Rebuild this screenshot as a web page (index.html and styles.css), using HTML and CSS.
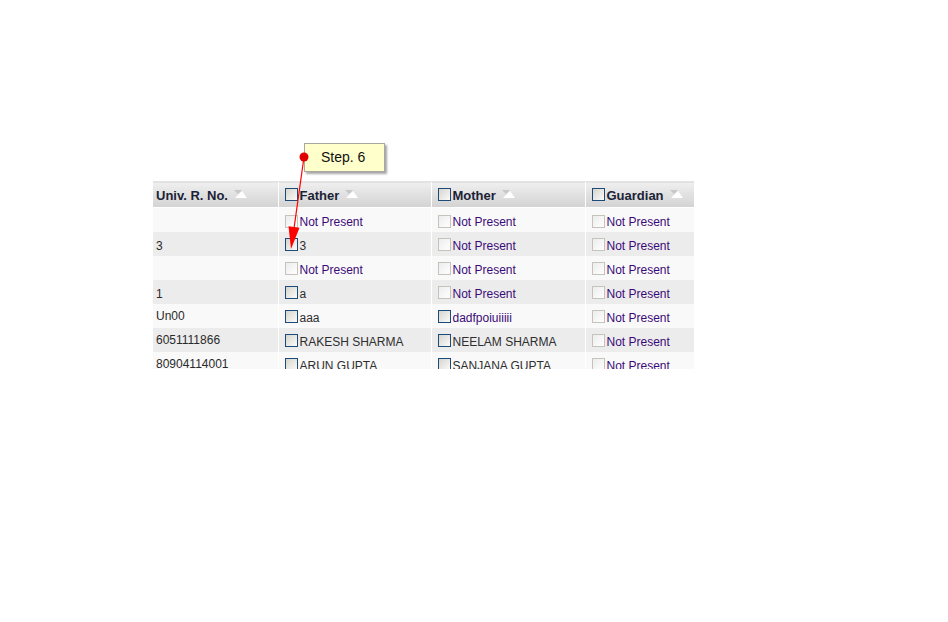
FILE: index.html
```html
<!DOCTYPE html>
<html>
<head>
<meta charset="utf-8">
<link rel="stylesheet" href="styles.css">
</head>
<body>
<div class="page">
  <div class="grid-wrap">
    <table class="grid">
      <colgroup>
        <col class="c1"><col class="c2"><col class="c3"><col class="c4">
      </colgroup>
      <thead>
        <tr>
          <th><span class="hd">Univ. R. No.</span><svg class="sort" width="14" height="8" viewBox="0 0 14 8"><polygon points="0,0 8,0 4,4" fill="#c8c8c8"/><polygon points="1,8 13,8 8,1" fill="#ffffff"/></svg></th>
          <th><span class="cb on"></span><span class="hd">Father</span><svg class="sort" width="14" height="8" viewBox="0 0 14 8"><polygon points="0,0 8,0 4,4" fill="#c8c8c8"/><polygon points="1,8 13,8 8,1" fill="#ffffff"/></svg></th>
          <th><span class="cb on"></span><span class="hd">Mother</span><svg class="sort" width="14" height="8" viewBox="0 0 14 8"><polygon points="0,0 8,0 4,4" fill="#c8c8c8"/><polygon points="1,8 13,8 8,1" fill="#ffffff"/></svg></th>
          <th><span class="cb on"></span><span class="hd">Guardian</span><svg class="sort" width="14" height="8" viewBox="0 0 14 8"><polygon points="0,0 8,0 4,4" fill="#c8c8c8"/><polygon points="1,8 13,8 8,1" fill="#ffffff"/></svg></th>
        </tr>
      </thead>
      <tbody>
        <tr class="odd">
          <td></td>
          <td><span class="cb"></span><span class="np">Not Present</span></td>
          <td><span class="cb"></span><span class="np">Not Present</span></td>
          <td><span class="cb"></span><span class="np">Not Present</span></td>
        </tr>
        <tr class="even">
          <td>3</td>
          <td><span class="cb on"></span><span class="val">3</span></td>
          <td><span class="cb"></span><span class="np">Not Present</span></td>
          <td><span class="cb"></span><span class="np">Not Present</span></td>
        </tr>
        <tr class="odd">
          <td></td>
          <td><span class="cb"></span><span class="np">Not Present</span></td>
          <td><span class="cb"></span><span class="np">Not Present</span></td>
          <td><span class="cb"></span><span class="np">Not Present</span></td>
        </tr>
        <tr class="even">
          <td>1</td>
          <td><span class="cb on"></span><span class="val">a</span></td>
          <td><span class="cb"></span><span class="np">Not Present</span></td>
          <td><span class="cb"></span><span class="np">Not Present</span></td>
        </tr>
        <tr class="odd">
          <td class="raise">Un00</td>
          <td><span class="cb on"></span><span class="val">aaa</span></td>
          <td><span class="cb on"></span><span class="np">dadfpoiuiiiii</span></td>
          <td><span class="cb"></span><span class="np">Not Present</span></td>
        </tr>
        <tr class="even">
          <td class="raise">6051111866</td>
          <td><span class="cb on"></span><span class="val">RAKESH SHARMA</span></td>
          <td><span class="cb on"></span><span class="val">NEELAM SHARMA</span></td>
          <td><span class="cb"></span><span class="np">Not Present</span></td>
        </tr>
        <tr class="odd">
          <td class="raise">80904114001</td>
          <td><span class="cb on"></span><span class="val">ARUN GUPTA</span></td>
          <td><span class="cb on"></span><span class="val">SANJANA GUPTA</span></td>
          <td><span class="cb"></span><span class="np">Not Present</span></td>
        </tr>
      </tbody>
    </table>
  </div>

  <div class="callout">Step. 6</div>
  <svg class="pointer" width="948" height="622" viewBox="0 0 948 622">
    <line x1="304" y1="157" x2="293.5" y2="232" stroke="#ff0000" stroke-width="1.2"/>
    <polygon points="288.5,226.2 299.5,227.8 291,249" fill="#ff0000"/>
    <circle cx="304" cy="157" r="4.5" fill="#e00000"/>
  </svg>
</div>
</body>
</html>
```

FILE: styles.css
```css
html, body {
  margin: 0;
  padding: 0;
  background: #ffffff;
}

.page {
  position: relative;
  width: 948px;
  height: 622px;
  overflow: hidden;
  font-family: "Liberation Sans", Arial, sans-serif;
}

.grid-wrap {
  margin: 181px 0 0 153px;
  width: 541px;
  height: 188px;
  overflow: hidden;
}

.grid {
  table-layout: fixed;
  border-collapse: collapse;
  width: 541px;
}

.c1 { width: 125px; }
.c2 { width: 153px; }
.c3 { width: 154px; }
.c4 { width: 109px; }

.grid th {
  height: 26px;
  padding: 0 0 0 6px;
  text-align: left;
  white-space: nowrap;
  background: linear-gradient(#efefef 0%, #e2e2e2 45%, #d3d3d3 100%);
  border-top: 1px solid #e4e4e4;
  border-left: 1px solid #ffffff;
  border-bottom: 1px solid #ffffff;
  box-sizing: border-box;
  vertical-align: middle;
}

.grid th:first-child {
  padding-left: 3px;
  border-left: 0;
}

.hd {
  font-weight: bold;
  font-size: 13px;
  color: #1b2236;
  vertical-align: middle;
}

.sort {
  display: inline-block;
  vertical-align: middle;
  margin-left: 6px;
  margin-top: -2px;
}

.grid td {
  height: 24px;
  padding: 4px 0 0 6px;
  font-size: 12px;
  color: #333333;
  white-space: nowrap;
  border-left: 1px solid #ffffff;
  box-sizing: border-box;
  vertical-align: middle;
}

.grid td:first-child {
  padding-left: 3px;
  border-left: 0;
  color: #2a2a2a;
}

.grid td.raise {
  vertical-align: top;
  padding-top: 5px;
}

.grid tr.odd td { background: #f9f9f9; }
.grid tr.even td { background: #ececec; }

.cb {
  display: inline-block;
  width: 13px;
  height: 13px;
  box-sizing: border-box;
  border: 1px solid #c6c3bd;
  background: linear-gradient(135deg, #ececec, #ffffff);
  vertical-align: middle;
  margin: -2px 2px 0 0;
}

.cb.on {
  border-color: #1c4b7a;
  background: linear-gradient(135deg, #d6d4cc, #fbfbfb);
}

.np {
  color: #3c0a78;
  vertical-align: middle;
}

.val {
  color: #2e2e2e;
  vertical-align: middle;
}

.callout {
  position: absolute;
  left: 304px;
  top: 143px;
  width: 81px;
  height: 29px;
  box-sizing: border-box;
  background: #ffffcc;
  border: 1px solid #a8a8a0;
  box-shadow: 2px 2px 2px rgba(0, 0, 0, 0.35);
  font-size: 14px;
  color: #111111;
  padding-left: 16px;
  line-height: 27px;
}

.pointer {
  position: absolute;
  left: 0;
  top: 0;
  pointer-events: none;
}
```
